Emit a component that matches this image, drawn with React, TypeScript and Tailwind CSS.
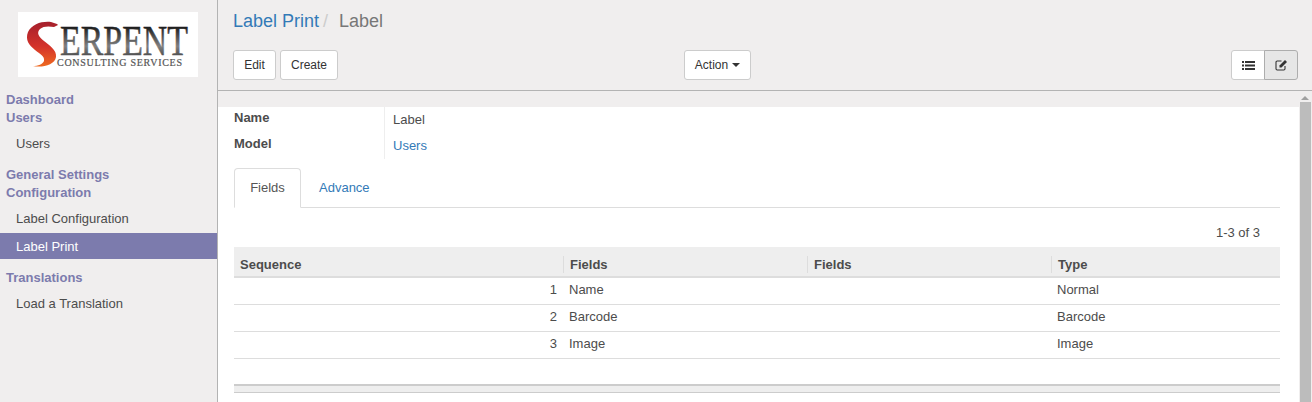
function Logo() {
  return (
    <svg width="180" height="65" viewBox="0 0 180 65" className="block">
      <defs>
        <linearGradient id="metal" x1="0" y1="0" x2="0" y2="1">
          <stop offset="0.2" stopColor="#1c1c1c" />
          <stop offset="0.62" stopColor="#808080" />
          <stop offset="0.8" stopColor="#555" />
        </linearGradient>
        <linearGradient id="snake" x1="0" y1="0" x2="0" y2="1">
          <stop offset="0" stopColor="#a5202c" />
          <stop offset="0.55" stopColor="#d4322a" />
          <stop offset="1" stopColor="#ee6a20" />
        </linearGradient>
      </defs>
      <rect width="180" height="65" fill="#fff" />
      <path
        d="M39 12 L33 10 C24 9 14 12 10 20 C7 28 11 33 17 38 C22 42 27 44 26 49 C25 52 20 54 15 54 C24 56 37 53 38 45 C39 38 31 33 26 29 C21 25 18 21 22 17 C25 14 31 14 36 15 L40 13 Z"
        fill="url(#snake)"
      />
      <text
        transform="translate(42 43) scale(0.807 1)"
        fontFamily="'Liberation Serif', serif"
        fontSize="42"
        fill="url(#metal)"
        stroke="url(#metal)"
        strokeWidth="0.5"
      >
        ERPENT
      </text>
      <text
        x="39"
        y="54"
        fontFamily="'Liberation Serif', serif"
        fontSize="10"
        textLength="125"
        lengthAdjust="spacing"
        fill="#555"
        stroke="#555"
        strokeWidth="0.2"
      >
        CONSULTING SERVICES
      </text>
    </svg>
  );
}

function ListIcon() {
  return (
    <svg width="13" height="11" viewBox="0 0 13 11" fill="#333">
      <rect x="0" y="1" width="2" height="2" />
      <rect x="3" y="1" width="10" height="2" />
      <rect x="0" y="4.5" width="2" height="2" />
      <rect x="3" y="4.5" width="10" height="2" />
      <rect x="0" y="8" width="2" height="2" />
      <rect x="3" y="8" width="10" height="2" />
    </svg>
  );
}

function EditIcon() {
  return (
    <svg width="13" height="12" viewBox="0 0 13 12">
      <path
        d="M6.5 2 H2.2 A1.2 1.2 0 0 0 1 3.2 V9.8 A1.2 1.2 0 0 0 2.2 11 H8.8 A1.2 1.2 0 0 0 10 9.8 V7"
        fill="none"
        stroke="#333"
        strokeWidth="1.1"
      />
      <path d="M4.5 6.5 L10 1 L12 3 L6.5 8.5 L4.5 8.5 Z" fill="#333" />
    </svg>
  );
}

function Heading({ children }: { children: React.ReactNode }) {
  return <div className="h-[18px] leading-[18px] px-[6px] font-bold text-[#7c7bad]">{children}</div>;
}

function Item({ children, active }: { children: React.ReactNode; active?: boolean }) {
  return (
    <div
      className={
        "h-[26px] pl-[16px] " +
        (active ? "leading-[27px] bg-[#7c7bad] text-white" : "leading-[25px] text-[#4c4c4c]")
      }
    >
      {children}
    </div>
  );
}

function Btn({ children, className = "" }: { children: React.ReactNode; className?: string }) {
  return (
    <button
      className={
        "h-[30px] bg-white border border-[#cccccc] rounded-[3px] text-[12px] text-[#333] flex items-center justify-center " +
        className
      }
    >
      {children}
    </button>
  );
}

const rows = [
  { seq: "1", name: "Name", type: "Normal", pad: "pb-[3px]" },
  { seq: "2", name: "Barcode", type: "Barcode", pad: "pb-[1px]" },
  { seq: "3", name: "Image", type: "Image", pad: "pb-[1px]" },
];

export default function App() {
  return (
    <div className="w-[1312px] h-[402px] overflow-hidden flex bg-[#f0eeee] text-[13px] text-[#4c4c4c] font-['Liberation_Sans',Arial,sans-serif]">
      <aside className="w-[218px] shrink-0 border-r border-[#b3b3b3]">
        <div className="pt-[12px] pl-[18px]">
          <Logo />
        </div>
        <div className="pt-[14px]">
          <Heading>Dashboard</Heading>
          <Heading>Users</Heading>
          <div className="mt-[4px]">
            <Item>Users</Item>
          </div>
          <div className="mt-[9px]">
            <Heading>General Settings</Heading>
            <Heading>Configuration</Heading>
          </div>
          <div className="mt-[4px]">
            <Item>Label Configuration</Item>
            <div className="h-[1px]" />
            <Item active>Label Print</Item>
          </div>
          <div className="mt-[10px]">
            <Heading>Translations</Heading>
          </div>
          <div className="mt-[4px]">
            <Item>Load a Translation</Item>
          </div>
        </div>
      </aside>

      <main className="flex-1 min-w-0 flex flex-col">
        <header className="h-[91px] shrink-0 border-b border-[#b3b3b3] pl-[15px] pr-[14px]">
          <div className="h-[50px] pt-[8px] text-[18px] leading-[26px]">
            <span className="text-[#337ab7]">Label Print</span>
            <span className="text-[#cccccc] pl-[4px] pr-[11px]">/</span>
            <span className="text-[#777777]">Label</span>
          </div>
          <div className="flex items-start">
            <div className="flex gap-[4px] w-[451px]">
              <Btn className="w-[43px]">Edit</Btn>
              <Btn className="w-[58px]">Create</Btn>
            </div>
            <Btn className="w-[67px] gap-[4px]">
              Action
              <span className="w-0 h-0 border-x-[4px] border-x-transparent border-t-[4px] border-t-[#333]" />
            </Btn>
            <div className="ml-auto flex">
              <button className="w-[34px] h-[30px] bg-white border border-[#cccccc] rounded-l-[3px] flex items-center justify-center">
                <ListIcon />
              </button>
              <button className="w-[34px] h-[30px] bg-[#e6e6e6] border border-[#adadad] rounded-r-[3px] -ml-px flex items-center justify-center">
                <EditIcon />
              </button>
            </div>
          </div>
        </header>

        <div className="flex-1 min-h-0 flex">
          <div className="flex-1 min-w-0 flex flex-col">
            <div className="h-[16px] shrink-0" />
            <div className="flex-1 bg-white pl-[16px] pr-[19px]">
              <div className="flex h-[52px]">
                <div className="w-[151px] border-r border-[#eeeeee] font-bold">
                  <div className="h-[26px] leading-[21px]">Name</div>
                  <div className="h-[26px] leading-[21px]">Model</div>
                </div>
                <div className="pl-[8px]">
                  <div className="h-[26px] leading-[25px]">Label</div>
                  <div className="h-[26px] leading-[25px] text-[#337ab7]">Users</div>
                </div>
              </div>

              <div className="mt-[9px] h-[40px] flex border-b border-[#dddddd]">
                <div className="w-[67px] h-[40px] bg-white border border-[#dddddd] border-b-white rounded-t-[4px] flex items-center justify-center text-[#555]">
                  Fields
                </div>
                <div className="ml-[18px] h-[40px] leading-[40px] text-[#337ab7]">Advance</div>
              </div>

              <div className="h-[39px] pr-[20px] pt-[16px] leading-[18px] text-right">1-3 of 3</div>

              <table className="w-[1046px] table-fixed border-collapse">
                <colgroup>
                  <col className="w-[329px]" />
                  <col className="w-[244px]" />
                  <col className="w-[244px]" />
                  <col />
                </colgroup>
                <thead>
                  <tr className="h-[30px] bg-[#eeeeee] border-b-2 border-[#dddddd]">
                    <th className="text-left font-bold pl-[6px] pt-[6px]">Sequence</th>
                    <th className="text-left font-bold pl-[7px] pt-[6px]">
                      <span className="block h-[17px] -ml-[7px] pl-[6px] border-l border-[#dddddd] leading-[17px]">Fields</span>
                    </th>
                    <th className="text-left font-bold pl-[7px] pt-[6px]">
                      <span className="block h-[17px] -ml-[7px] pl-[6px] border-l border-[#dddddd] leading-[17px]">Fields</span>
                    </th>
                    <th className="text-left font-bold pl-[7px] pt-[6px]">
                      <span className="block h-[17px] -ml-[7px] pl-[6px] border-l border-[#dddddd] leading-[17px]">Type</span>
                    </th>
                  </tr>
                </thead>
                <tbody>
                  {rows.map((r) => (
                    <tr key={r.seq} className="h-[27px] border-b border-[#dddddd]">
                      <td className={"text-right pr-[6px] " + r.pad}>{r.seq}</td>
                      <td className={"pl-[6px] " + r.pad}>{r.name}</td>
                      <td />
                      <td className={"pl-[6px] " + r.pad}>{r.type}</td>
                    </tr>
                  ))}
                </tbody>
              </table>
              <div className="mt-[25px] h-[9px] w-[1046px] bg-[#eeeeee] border-t-2 border-b border-[#cccccc]" />
            </div>
          </div>

          <div className="w-[13px] shrink-0 pr-[1px] flex flex-col items-center pt-[5px]">
            <span className="w-0 h-0 border-x-[4px] border-x-transparent border-b-[4px] border-b-[#a0a0a0]" />
            <div className="mt-[2px] w-[11px] flex-1 bg-[#bcbcbc]" />
          </div>
        </div>
      </main>
    </div>
  );
}
